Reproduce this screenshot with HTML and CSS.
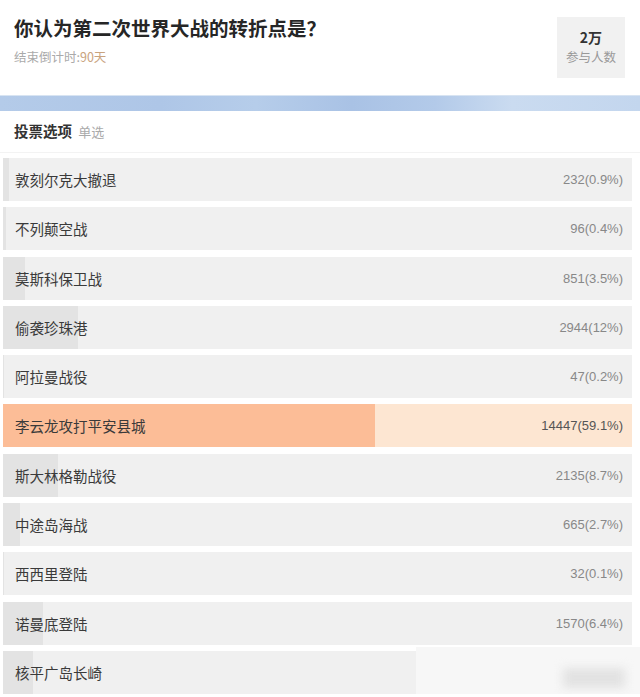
FILE: index.html
```html
<!DOCTYPE html>
<html lang="zh-CN">
<head>
<meta charset="utf-8">
<title>投票</title>
<link rel="stylesheet" href="styles.css">
</head>
<body>
  <div class="header">
    <div class="header-text">
      <h1 class="title">你认为第二次世界大战的转折点是？</h1>
      <div class="countdown">结束倒计时:<span class="days">90天</span></div>
    </div>
    <div class="joined">
      <div class="joined-num">2万</div>
      <div class="joined-label">参与人数</div>
    </div>
  </div>

  <div class="band"></div>

  <div class="section-title">投票选项 <span class="mode">单选</span></div>

  <ul class="options">
    <li class="option" style="--p:0.9%"><span class="label">敦刻尔克大撤退</span><span class="count">232(0.9%)</span></li>
    <li class="option" style="--p:0.4%"><span class="label">不列颠空战</span><span class="count">96(0.4%)</span></li>
    <li class="option" style="--p:3.5%"><span class="label">莫斯科保卫战</span><span class="count">851(3.5%)</span></li>
    <li class="option" style="--p:12%"><span class="label">偷袭珍珠港</span><span class="count">2944(12%)</span></li>
    <li class="option" style="--p:0.2%"><span class="label">阿拉曼战役</span><span class="count">47(0.2%)</span></li>
    <li class="option top" style="--p:59.1%"><span class="label">李云龙攻打平安县城</span><span class="count">14447(59.1%)</span></li>
    <li class="option" style="--p:8.7%"><span class="label">斯大林格勒战役</span><span class="count">2135(8.7%)</span></li>
    <li class="option" style="--p:2.7%"><span class="label">中途岛海战</span><span class="count">665(2.7%)</span></li>
    <li class="option" style="--p:0.1%"><span class="label">西西里登陆</span><span class="count">32(0.1%)</span></li>
    <li class="option" style="--p:6.4%"><span class="label">诺曼底登陆</span><span class="count">1570(6.4%)</span></li>
    <li class="option last" style="--p:4.8%"><span class="label">核平广岛长崎</span>
      <div class="mask"><div class="smudge"></div></div>
    </li>
  </ul>
</body>
</html>
```

FILE: styles.css
```css
body
{
	margin: 0;
	background: #FFF;
	font-family: "Liberation Sans", "Noto Sans CJK SC", sans-serif;
	color: #333;
	overflow: hidden;
}
.header
{
	display: flex;
	justify-content: space-between;
	align-items: flex-start;
	height: 95px;
	box-sizing: border-box;
	padding: 17px 15px 0 14px;
}
.title
{
	margin: 0;
	font-size: 19.5px;
	line-height: 22px;
	font-weight: bold;
	color: #262626;
	font-family: "Noto Sans CJK SC", sans-serif;
}
.countdown
{
	margin-top: 10px;
	font-size: 12.5px;
	line-height: 16px;
	color: #AAA;
	font-family: "Noto Sans CJK SC", sans-serif;
}
.countdown .days
{
	color: #C9A37E;
}
.joined
{
	width: 68px;
	height: 61px;
	background: #F1F1F1;
	text-align: center;
	box-sizing: border-box;
	padding-top: 11px;
}
.joined-num
{
	font-size: 14px;
	line-height: 18px;
	font-weight: bold;
	color: #333;
	font-family: "Noto Sans CJK SC", sans-serif;
}
.joined-label
{
	margin-top: 3px;
	font-size: 12.5px;
	line-height: 16px;
	color: #999;
	font-family: "Noto Sans CJK SC", sans-serif;
}
.band
{
	height: 15px;
	border-top: 1px solid #D8E4F2;
	background: linear-gradient(to right, #B4CBE9 0%, #AEC6E7 25%, #B6CDEA 40%, #A9C2E5 55%, #B3CAE9 68%, #CADBF0 80%, #C3D6EE 100%);
}
.section-title
{
	margin: 0;
	padding: 11px 14px 0;
	height: 30px;
	font-size: 14.5px;
	line-height: 18px;
	font-weight: bold;
	color: #333;
	border-bottom: 1px solid #F3F3F3;
	font-family: "Noto Sans CJK SC", sans-serif;
}
.section-title .mode
{
	margin-left: 3px;
	font-size: 13px;
	font-weight: normal;
	color: #AAA;
}
.options
{
	list-style: none;
	margin: 0;
	padding: 5px 8px 0 3px;
	display: flex;
	flex-direction: column;
	gap: 6.3px;
}
.option
{
	position: relative;
	height: 43px;
	display: flex;
	align-items: center;
	justify-content: space-between;
	padding: 0 9px 0 12px;
	background: linear-gradient(to right, #E3E3E3 var(--p), #F0F0F0 var(--p));
}
.option.top
{
	background: linear-gradient(to right, #FCBD97 var(--p), #FDE6D2 var(--p));
}
.label
{
	font-size: 14.5px;
	color: #3A3A3A;
	font-family: "Noto Sans CJK SC", sans-serif;
}
.count
{
	font-size: 13px;
	color: #888;
}
.option.top .count
{
	color: #555;
}
.mask
{
	position: absolute;
	left: 413px;
	right: -8px;
	top: -4px;
	bottom: -10px;
	background: #F7F7F7;
}
.smudge
{
	position: absolute;
	left: 147px;
	top: 21px;
	width: 62px;
	height: 20px;
	background: #E2E2E2;
	filter: blur(5px);
}
```
